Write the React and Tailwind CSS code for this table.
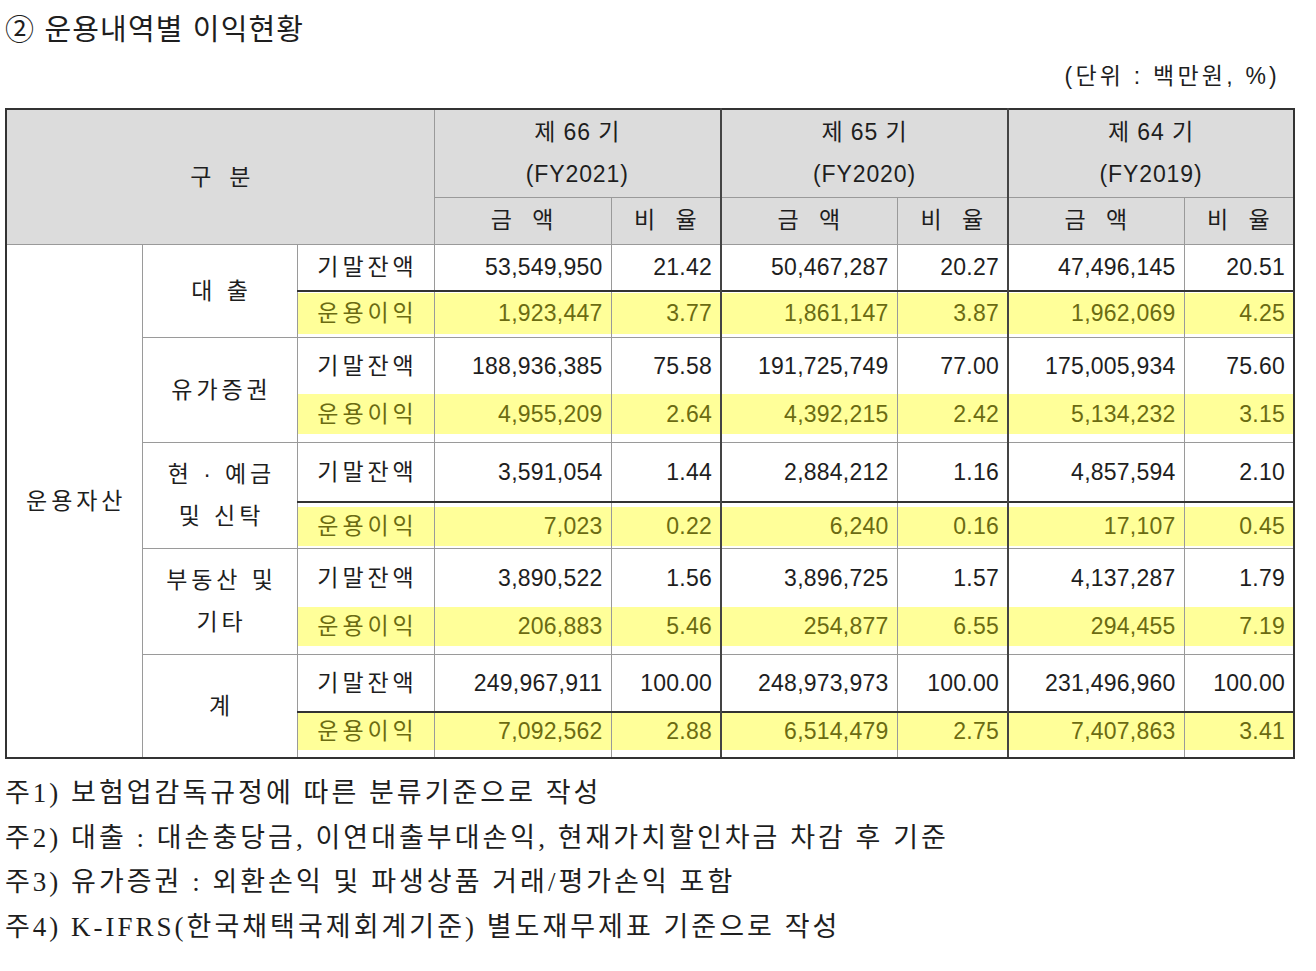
import React from "react";

const groups = [
  {
    label: ["대 출"],
    rows: [
      ["53,549,950", "21.42", "50,467,287", "20.27", "47,496,145", "20.51"],
      ["1,923,447", "3.77", "1,861,147", "3.87", "1,962,069", "4.25"],
    ],
    balH: "h-[47px]",
    incH: "h-[46px]",
    box: "h-[41px] mt-[1px]",
    dark: true,
  },
  {
    label: ["유가증권"],
    rows: [
      ["188,936,385", "75.58", "191,725,749", "77.00", "175,005,934", "75.60"],
      ["4,955,209", "2.64", "4,392,215", "2.42", "5,134,232", "3.15"],
    ],
    balH: "h-[57px]",
    incH: "h-[48px]",
    box: "h-[40px]",
    dark: false,
  },
  {
    label: ["현 · 예금", "및 신탁"],
    rows: [
      ["3,591,054", "1.44", "2,884,212", "1.16", "4,857,594", "2.10"],
      ["7,023", "0.22", "6,240", "0.16", "17,107", "0.45"],
    ],
    balH: "h-[60px]",
    incH: "h-[46px]",
    box: "h-[39px] mt-[4px]",
    dark: true,
  },
  {
    label: ["부동산 및", "기타"],
    rows: [
      ["3,890,522", "1.56", "3,896,725", "1.57", "4,137,287", "1.79"],
      ["206,883", "5.46", "254,877", "6.55", "294,455", "7.19"],
    ],
    balH: "h-[59px]",
    incH: "h-[47px]",
    box: "h-[39px]",
    dark: false,
  },
  {
    label: ["계"],
    rows: [
      ["249,967,911", "100.00", "248,973,973", "100.00", "231,496,960", "100.00"],
      ["7,092,562", "2.88", "6,514,479", "2.75", "7,407,863", "3.41"],
    ],
    balH: "h-[58px]",
    incH: "h-[46px]",
    box: "h-[37px]",
    dark: true,
  },
];

const years = [
  ["제 66 기", "(FY2021)"],
  ["제 65 기", "(FY2020)"],
  ["제 64 기", "(FY2019)"],
];

const notes = [
  "주1) 보험업감독규정에 따른 분류기준으로 작성",
  "주2) 대출 : 대손충당금, 이연대출부대손익, 현재가치할인차금 차감 후 기준",
  "주3) 유가증권 : 외환손익 및 파생상품 거래/평가손익 포함",
  "주4) K-IFRS(한국채택국제회계기준) 별도재무제표 기준으로 작성",
];

// group ends get the dark rule
const valueBorder = (i) =>
  i === 1 || i === 3
    ? "border-r-2 border-r-[#444]"
    : i === 5
    ? "border-r-2 border-r-[#333]"
    : "border-r border-r-[#9a9a9a]";

function BalanceRow({ g, gi }) {
  return (
    <tr className={g.balH}>
      {gi === 0 && (
        <td
          rowSpan={10}
          className="border-l-2 border-l-[#333] border-r border-r-[#9a9a9a] border-b-2 border-b-[#333] text-center align-middle text-[23px] tracking-[0.17em] pl-[4px]"
        >
          운용자산
        </td>
      )}
      <td
        rowSpan={2}
        className={`border-r border-r-[#9a9a9a] ${gi === 4 ? "border-b-2 border-b-[#333]" : "border-b border-b-[#9a9a9a]"} text-center align-middle text-[23px] tracking-[0.17em] pl-[4px] leading-[42px]`}
      >
        {g.label.map((l) => (
          <div key={l}>{l}</div>
        ))}
      </td>
      <td className="border-r border-r-[#9a9a9a] text-center align-middle text-[23px] tracking-[0.17em] pl-[4px]">기말잔액</td>
      {g.rows[0].map((v, i) => (
        <td key={i} className={`${valueBorder(i)} text-right align-middle pr-[8px] text-[23px] tracking-[0.01em]`}>
          {v}
        </td>
      ))}
    </tr>
  );
}

function IncomeRow({ g, gi }) {
  const top = g.dark ? "border-t-2 border-t-[#333]" : "";
  const bottom = gi === 4 ? "border-b-2 border-b-[#333]" : "border-b border-b-[#9a9a9a]";
  return (
    <tr className={g.incH}>
      <td className={`${top} ${bottom} border-r border-r-[#9a9a9a] p-0 align-top`}>
        <div className={`${g.box} bg-[#ffff99] text-[#6b6b12] flex items-center justify-center text-[23px] tracking-[0.17em] pl-[4px]`}>
          운용이익
        </div>
      </td>
      {g.rows[1].map((v, i) => (
        <td key={i} className={`${top} ${bottom} ${valueBorder(i)} p-0 align-top`}>
          <div className={`${g.box} bg-[#ffff99] text-[#6b6b12] flex items-center justify-end pr-[8px] text-[23px] tracking-[0.01em]`}>
            {v}
          </div>
        </td>
      ))}
    </tr>
  );
}

export default function App() {
  return (
    <div className="w-[1316px] h-[971px] bg-white text-[#1e1e1e] pl-[5px] font-['Liberation_Sans','Noto_Sans_CJK_KR',sans-serif]">
      <div className="pt-[12px] text-[29px] leading-[36px] tracking-[0.04em]">② 운용내역별 이익현황</div>
      <div className="mt-[13px] pr-[36px] text-right text-[23px] leading-[30px] tracking-[0.14em]">(단위 : 백만원, %)</div>

      <table className="mt-[17px] border-collapse table-fixed w-[1288px] text-[22px]">
        <colgroup>
          <col className="w-[136px]" />
          <col className="w-[155px]" />
          <col className="w-[137px]" />
          <col className="w-[177px]" />
          <col className="w-[110px]" />
          <col className="w-[176px]" />
          <col className="w-[111px]" />
          <col className="w-[176px]" />
          <col className="w-[110px]" />
        </colgroup>
        <thead>
          <tr className="h-[88px] bg-[#dcdcdc]">
            <th
              colSpan={3}
              rowSpan={2}
              className="font-normal text-[23px] border-t-2 border-t-[#333] border-l-2 border-l-[#333] border-r border-r-[#9a9a9a] border-b border-b-[#9a9a9a] tracking-[0.25em] pl-[6px]"
            >
              구 분
            </th>
            {years.map((y, i) => (
              <th
                key={i}
                colSpan={2}
                className={`font-normal text-[23px] border-t-2 border-t-[#333] border-b border-b-[#9a9a9a] leading-[42px] tracking-[0.04em] ${i < 2 ? "border-r-2 border-r-[#444]" : "border-r-2 border-r-[#333]"}`}
              >
                <div>{y[0]}</div>
                <div>{y[1]}</div>
              </th>
            ))}
          </tr>
          <tr className="h-[47px] bg-[#dcdcdc]">
            {[0, 1, 2, 3, 4, 5].map((i) => (
              <th key={i} className={`font-normal text-[23px] border-b border-b-[#9a9a9a] tracking-[0.3em] pl-[6px] ${valueBorder(i)}`}>
                {i % 2 === 0 ? "금 액" : "비 율"}
              </th>
            ))}
          </tr>
        </thead>
        <tbody>
          {groups.map((g, gi) => (
            <React.Fragment key={gi}>
              <BalanceRow g={g} gi={gi} />
              <IncomeRow g={g} gi={gi} />
            </React.Fragment>
          ))}
        </tbody>
      </table>

      <div className="mt-[12px] text-[27px] leading-[44.5px] tracking-[3px] text-[#1e1e1e] font-['Liberation_Serif','Noto_Sans_CJK_KR',serif]">
        {notes.map((n) => (
          <div key={n}>{n}</div>
        ))}
      </div>
    </div>
  );
}
